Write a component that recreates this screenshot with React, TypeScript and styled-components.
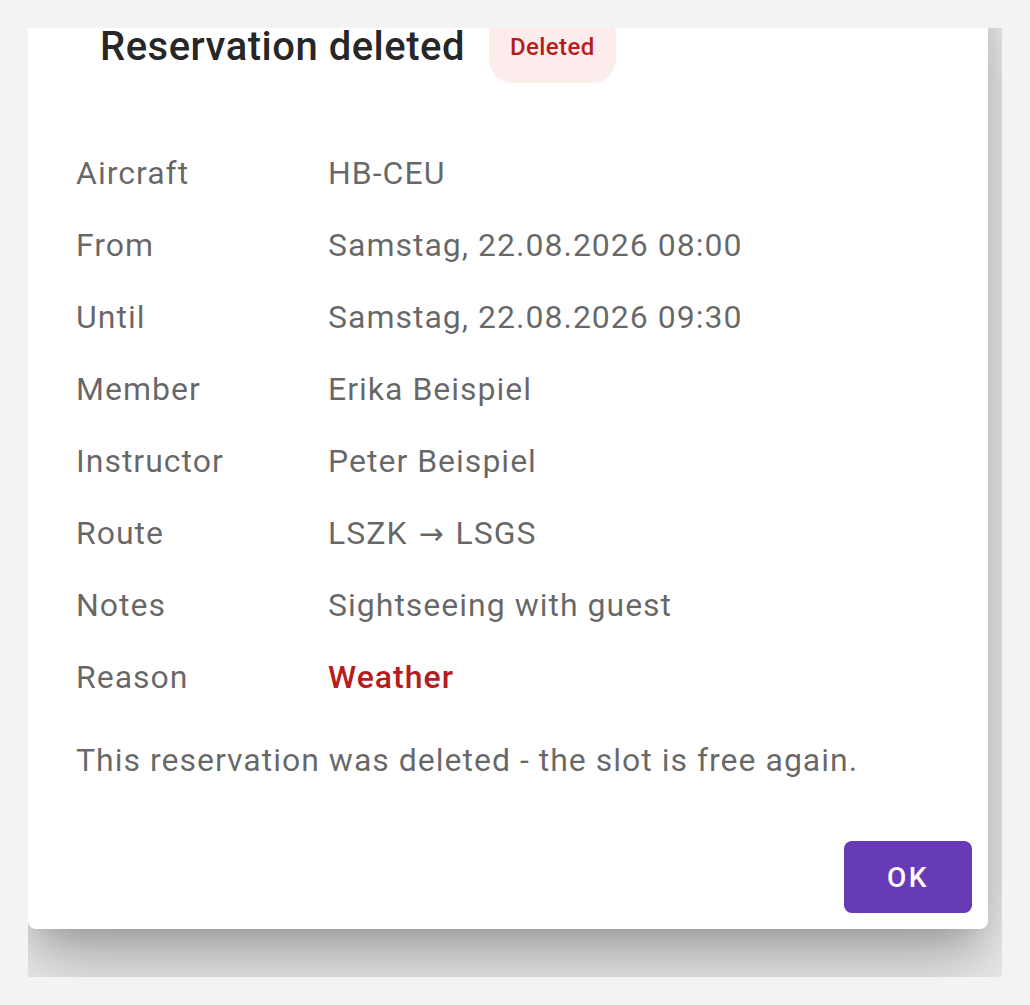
import React from "react";
import styled, { createGlobalStyle } from "styled-components";

const GlobalStyle = createGlobalStyle`
  html, body {
    margin: 0;
    padding: 0;
    background: #f3f3f3;
    font-family: Roboto, "Liberation Sans", Arial, sans-serif;
  }
`;

const Page = styled.div`
  padding: 28px;
  width: 1030px;
  height: 1005px;
  box-sizing: border-box;
`;

const Viewport = styled.div`
  width: 974px;
  height: 949px;
  overflow: hidden;
  display: flex;
  flex-direction: column;
  justify-content: flex-end;
  padding: 0 14px 48px 0;
  box-sizing: border-box;
`;

const Dialog = styled.div`
  flex-shrink: 0;
  width: 960px;
  background: #fff;
  border-radius: 8px;
  box-shadow: 0 22px 30px -14px rgba(0, 0, 0, 0.2),
    0 48px 76px 6px rgba(0, 0, 0, 0.14), 0 18px 92px 16px rgba(0, 0, 0, 0.12);
  display: flex;
  flex-direction: column;
`;

const Header = styled.div`
  display: flex;
  align-items: center;
  gap: 24px;
  padding: 40px 48px 26px 72px;
`;

const Title = styled.h2`
  margin: 0;
  font-size: 40px;
  font-weight: 500;
  line-height: 1.6;
  letter-spacing: 0.5px;
  color: rgba(0, 0, 0, 0.87);
`;

const Badge = styled.span`
  height: 72px;
  line-height: 72px;
  padding: 0 21px;
  border-radius: 24px;
  background: #fdecec;
  color: #b71c1c;
  font-size: 24px;
  font-weight: 500;
  letter-spacing: 0.4px;
`;

const Content = styled.div`
  padding: 40px 48px 41px;
`;

const Details = styled.dl`
  margin: 0;
  display: grid;
  grid-template-columns: 252px 1fr;
  row-gap: 24px;
`;

const Label = styled.dt`
  margin: 0;
  font-size: 32px;
  line-height: 48px;
  letter-spacing: 1px;
  color: rgba(0, 0, 0, 0.6);
`;

const Value = styled.dd<{ $accent?: boolean }>`
  margin: 0;
  height: 48px;
  font-size: 32px;
  line-height: 48px;
  letter-spacing: 1px;
  color: ${(p) => (p.$accent ? "#b71c1c" : "rgba(0, 0, 0, 0.6)")};
  font-weight: ${(p) => (p.$accent ? 500 : 400)};
`;

const Arrow = styled.span`
  font-family: "DejaVu Sans", sans-serif;
  font-size: 30px;
  line-height: 0;
  letter-spacing: 0;
  margin: 0 3px 0 2px;
`;

const Note = styled.p`
  margin: 35px 0 0;
  font-size: 32px;
  line-height: 48px;
  letter-spacing: 1px;
  color: rgba(0, 0, 0, 0.6);
`;

const Actions = styled.div`
  display: flex;
  justify-content: flex-end;
  padding: 16px;
`;

const PrimaryButton = styled.button`
  min-width: 128px;
  height: 72px;
  border: none;
  border-radius: 8px;
  background: #673ab7;
  color: #fff;
  font-family: Roboto, "Liberation Sans", Arial, sans-serif;
  font-size: 28px;
  font-weight: 500;
  letter-spacing: 2.5px;
  text-transform: uppercase;
  cursor: pointer;
`;

const rows: { label: string; value: React.ReactNode; accent?: boolean }[] = [
  { label: "Aircraft", value: "HB-CEU" },
  { label: "From", value: "Samstag, 22.08.2026 08:00" },
  { label: "Until", value: "Samstag, 22.08.2026 09:30" },
  { label: "Member", value: "Erika Beispiel" },
  { label: "Instructor", value: "Peter Beispiel" },
  {
    label: "Route",
    value: (
      <>
        LSZK <Arrow>→</Arrow> LSGS
      </>
    ),
  },
  { label: "Notes", value: "Sightseeing with guest" },
  { label: "Reason", value: "Weather", accent: true },
];

export default function App() {
  return (
    <>
      <GlobalStyle />
      <Page>
        <Viewport>
          <Dialog role="dialog">
            <Header>
              <Title>Reservation deleted</Title>
              <Badge>Deleted</Badge>
            </Header>
            <Content>
              <Details>
                {rows.map((r) => (
                  <React.Fragment key={r.label}>
                    <Label>{r.label}</Label>
                    <Value $accent={r.accent}>{r.value}</Value>
                  </React.Fragment>
                ))}
              </Details>
              <Note>This reservation was deleted - the slot is free again.</Note>
            </Content>
            <Actions>
              <PrimaryButton>OK</PrimaryButton>
            </Actions>
          </Dialog>
        </Viewport>
      </Page>
    </>
  );
}
